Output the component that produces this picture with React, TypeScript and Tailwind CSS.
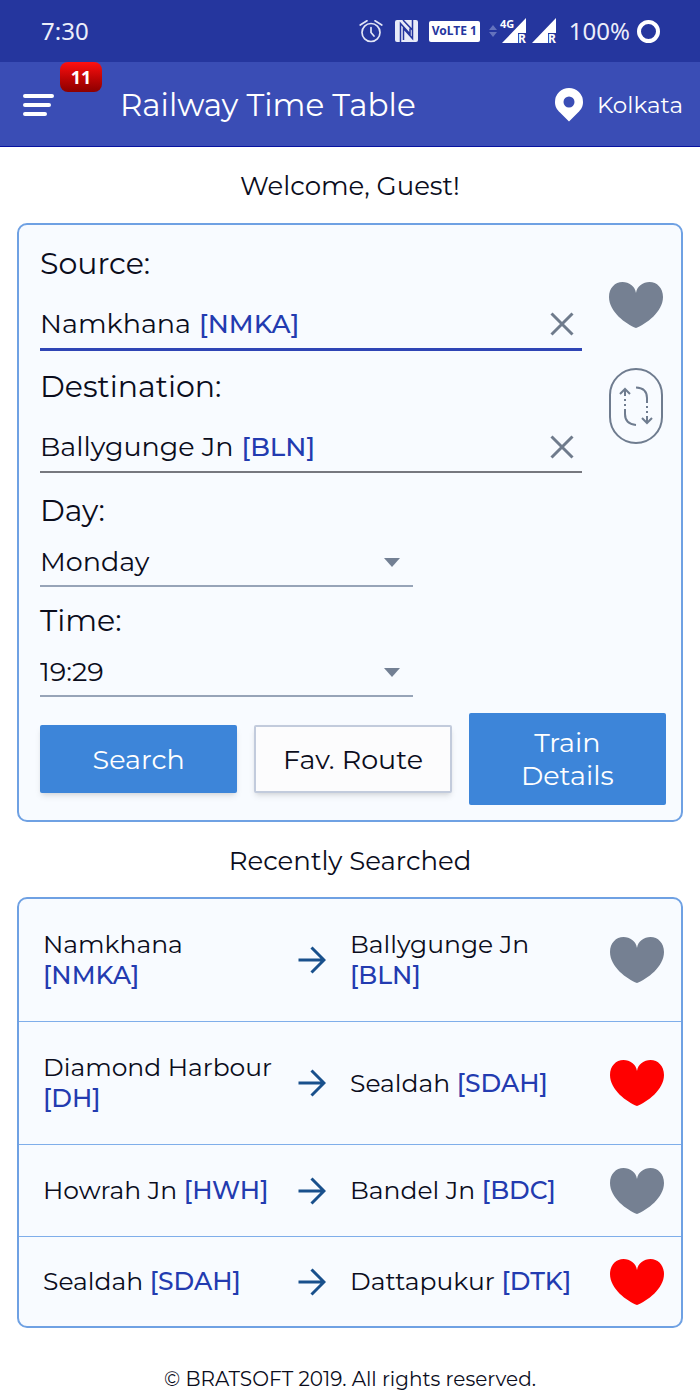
import { useState } from "react";

type Station = { name: string; code: string };

const recent: { from: Station; to: Station; favourite: boolean }[] = [
  { from: { name: "Namkhana", code: "NMKA" }, to: { name: "Ballygunge Jn", code: "BLN" }, favourite: false },
  { from: { name: "Diamond Harbour", code: "DH" }, to: { name: "Sealdah", code: "SDAH" }, favourite: true },
  { from: { name: "Howrah Jn", code: "HWH" }, to: { name: "Bandel Jn", code: "BDC" }, favourite: false },
  { from: { name: "Sealdah", code: "SDAH" }, to: { name: "Dattapukur", code: "DTK" }, favourite: true },
];

function Heart() {
  return (
    <svg viewBox="0 0 54 46" className="h-[46px] w-[54px]" fill="currentColor" aria-hidden="true">
      <path d="M27 46C17 42 0 30 0 15C0 6 6 0 13.500 0C20 0 26 4 27 11C28 4 34 0 40.500 0C48 0 54 6 54 15C54 30 37 42 27 46Z" />
    </svg>
  );
}

function Cross() {
  return (
    <svg viewBox="0 0 24 24" className="h-6 w-6" stroke="currentColor" strokeWidth="3" fill="none" aria-hidden="true">
      <path d="M1.500 1.500L22.500 22.500M22.500 1.500L1.500 22.500" />
    </svg>
  );
}

function Arrow() {
  return (
    <svg viewBox="0 0 28 28" className="h-7 w-7 shrink-0 text-[#19508c]" stroke="currentColor" strokeWidth="3" fill="none" aria-hidden="true">
      <path d="M0.500 14H26M13.500 1.500L26 14L13.500 26.500" />
    </svg>
  );
}

function StatusBar() {
  return (
    <div className="flex h-[62px] items-center bg-[#25369e] pr-10 pl-[41px] font-['Noto_Sans',sans-serif] text-2xl text-[#eceefa]">
      <span>7:30</span>
      <div className="ml-auto flex items-center">
        <svg viewBox="0 0 24 24" className="h-6 w-6" stroke="#e2e5f6" strokeWidth="1.700" fill="none" strokeLinecap="round" aria-hidden="true">
          <circle cx="12" cy="13.500" r="9" />
          <path d="M12 8.500V13.500L15 17M1.200 6L8 1.800M22.800 6L16 1.800" />
        </svg>
        <svg viewBox="0 0 23 22" className="ml-3 h-[22px] w-[23px]" aria-hidden="true">
          <rect width="23" height="22" rx="2" fill="#e8ebf8" />
          <path d="M5.500 22V3.500L15 14V8.500M8 0L17.500 10V0M17.500 10V18.500L8.500 8.500V20" stroke="#25369e" strokeWidth="1.500" fill="none" />
        </svg>
        <span className="ml-[11px] flex h-[21px] w-[51px] items-center justify-center rounded-xs bg-white text-[12px] font-bold whitespace-nowrap text-[#25369e]">
          VoLTE 1
        </span>
        <svg viewBox="0 0 8 12" className="ml-[9px] h-3 w-2" fill="#6573bd" aria-hidden="true">
          <path d="M0 5L4 0L8 5ZM0 7L4 12L8 7Z" />
        </svg>
        <svg viewBox="0 0 60 34" className="ml-[2px] h-[34px] w-[60px]" aria-hidden="true">
          <path d="M3 29L27 4V29ZM33 29L57 4V29Z" fill="#fff" />
          <path d="M19 19H29V30H19ZM49 19H59V30H49Z" fill="#25369e" />
          <path d="M0 3H15V14L13 16H0Z" fill="#25369e" />
          <text x="1" y="14" fontSize="11" fontWeight="700" fontFamily="Noto Sans" fill="#fff">4G</text>
          <text x="19" y="29" fontSize="12" fontWeight="700" fontFamily="Noto Sans" fill="#fff">R</text>
          <text x="49" y="29" fontSize="12" fontWeight="700" fontFamily="Noto Sans" fill="#fff">R</text>
        </svg>
        <span className="ml-[10px]">100%</span>
        <span className="ml-[7px] h-[23px] w-[23px] rounded-full border-4 border-white" />
      </div>
    </div>
  );
}

function StationField({ id, label, station, focused }: { id: string; label: string; station: Station; focused?: boolean }) {
  const [name, setName] = useState(station.name);
  return (
    <div>
      <label htmlFor={id} className="block text-[30px] leading-10">{label}</label>
      <div className={focused ? "mt-4 flex h-[51px] items-center border-b-3 border-[#2f45b5]" : "mt-4 flex h-[50px] items-center border-b-2 border-[#77787f]"}>
        <input
          id={id}
          value={name}
          onChange={(e) => setName(e.target.value)}
          className="field-sizing-content min-w-4 bg-transparent text-[27px] outline-none"
        />
        <span className="ml-2 text-[26px] font-medium text-[#233bb0]">{name && `[${station.code}]`}</span>
        <button type="button" aria-label={`Clear ${label}`} onClick={() => setName("")} className="mr-2 ml-auto text-[#6f7b8c]">
          <Cross />
        </button>
      </div>
    </div>
  );
}

function SelectField({ id, label, options }: { id: string; label: string; options: string[] }) {
  return (
    <div className="max-w-[373px]">
      <label htmlFor={id} className="block text-[30px] leading-10">{label}</label>
      <div className="mt-2 grid items-center border-b-2 border-[#97a4b8]">
        <select id={id} className="col-start-1 row-start-1 h-[46px] w-full appearance-none bg-transparent text-[27px] outline-none">
          {options.map((o) => <option key={o}>{o}</option>)}
        </select>
        <svg viewBox="0 0 16 9" className="pointer-events-none col-start-1 row-start-1 mr-[13px] h-[9px] w-4 justify-self-end" fill="#738094" aria-hidden="true">
          <path d="M0 0H16L8 9Z" />
        </svg>
      </div>
    </div>
  );
}

function StationName({ station }: { station: Station }) {
  return (
    <span>
      {station.name} <span className="font-medium whitespace-nowrap text-[#233bb0]">[{station.code}]</span>
    </span>
  );
}

export default function App() {
  const [source, destination] = [recent[0].from, recent[0].to];
  return (
    <div className="min-h-screen bg-white font-[Montserrat,Inter,sans-serif] text-[#0b0d1c]">
      <StatusBar />
      <header className="flex h-[85px] items-center border-b border-[#0712a0] bg-[#3a4db5] pt-0.5 pr-[17px] pl-[22px] text-white">
        <button type="button" aria-label="Menu, 11 notifications" className="relative">
          <svg viewBox="0 0 32 22" className="h-[22px] w-8" stroke="white" strokeWidth="4" strokeLinecap="round" aria-hidden="true">
            <path d="M3 2H30M3 11H27M3 20H23" />
          </svg>
          <span className="absolute -top-8 left-[38px] flex h-[30px] w-[42px] items-center justify-center rounded-lg bg-linear-to-b from-[#ff1010] to-[#8c0000] font-['Noto_Sans',sans-serif] text-lg font-bold">
            11
          </span>
        </button>
        <h1 className="ml-[66px] text-[31px]">Railway Time Table</h1>
        <button type="button" className="ml-auto flex items-center gap-[14px] text-[23px]">
          <svg viewBox="0 0 28 34" className="h-[34px] w-7" fill="white" aria-hidden="true">
            <path fillRule="evenodd" d="M14 0A14 14 0 0 1 28 14C28 19 26 21.500 23 24.500L14 33.500L5 24.500C2 21.500 0 19 0 14A14 14 0 0 1 14 0ZM14 8.500A5.500 5.500 0 1 0 14 19.500A5.500 5.500 0 1 0 14 8.500Z" />
          </svg>
          Kolkata
        </button>
      </header>

      <main className="px-[17px]">
        <p className="pt-[19px] text-center text-[26px] leading-10">Welcome, Guest!</p>

        <form onSubmit={(e) => e.preventDefault()} className="mt-[17px] rounded-[10px] border-2 border-[#6fa1e3] bg-[#f8fbff] pt-[19px] pr-[15px] pb-[15px] pl-[21px]">
          <div className="flex gap-[27px]">
            <div className="flex flex-1 flex-col gap-4">
              <StationField id="source" label="Source:" station={source} focused />
              <StationField id="destination" label="Destination:" station={destination} />
            </div>
            <div className="mr-[3px] flex flex-col items-center gap-10 pt-[38px]">
              <button type="button" aria-label="Add route to favourites" className="text-[#758092]"><Heart /></button>
              <button type="button" aria-label="Swap stations" className="text-[#6f7c8f]">
                <svg viewBox="0 0 54 76" className="h-[76px] w-[54px]" stroke="currentColor" strokeWidth="2" fill="none" aria-hidden="true">
                  <rect x="1" y="1" width="52" height="74" rx="26" />
                  <path d="M16 41V46Q16 56 27 57M16 38V36M16 33V31M16 28V21M11 26L16 21L21 26M27 19.500Q38 20 38 30V35M38 38V40M38 43V45M38 48V55M33 50L38 55L43 50" />
                </svg>
              </button>
            </div>
          </div>
          <div className="mt-[18px] flex flex-col gap-[14px]">
            <SelectField id="day" label="Day:" options={["Monday", "Tuesday", "Wednesday", "Thursday", "Friday", "Saturday", "Sunday"]} />
            <SelectField id="time" label="Time:" options={["19:29", "20:00", "21:00"]} />
          </div>
          <div className="mt-4 grid grid-cols-3 items-center gap-[17px] text-[27px] leading-[33px]">
            <button type="submit" className="h-[68px] rounded-xs bg-[#3d85d9] text-white shadow-md">Search</button>
            <button type="button" className="h-[68px] rounded-xs border-2 border-[#c2cbdc] bg-[#fcfcfd] whitespace-nowrap shadow-md">Fav. Route</button>
            <button type="button" className="h-[92px] rounded-xs bg-[#3d85d9] px-10 text-white">Train Details</button>
          </div>
        </form>

        <h2 className="pt-[19px] text-center text-[26px] leading-10">Recently Searched</h2>

        <ul className="mt-4 divide-y divide-[#7faeea] rounded-[10px] border-2 border-[#6fa1e3] bg-[#f8fbff] text-[25px] leading-[31px]">
          {recent.map((r) => (
            <li key={r.from.code + r.to.code} className="flex items-center py-[30px] pr-[17px] pl-6 last:py-[29px]">
              <div className="w-[240px]"><StationName station={r.from} /></div>
              <span className="ml-[15px]"><Arrow /></span>
              <div className="ml-6 w-[240px]"><StationName station={r.to} /></div>
              <button type="button" aria-label="Toggle favourite" aria-pressed={r.favourite} className={r.favourite ? "-my-2 ml-auto text-[#ff0000]" : "-my-2 ml-auto text-[#758092]"}>
                <Heart />
              </button>
            </li>
          ))}
        </ul>
      </main>
      <footer className="pt-[35px] text-center text-xl leading-8">© BRATSOFT 2019. All rights reserved.</footer>
    </div>
  );
}
